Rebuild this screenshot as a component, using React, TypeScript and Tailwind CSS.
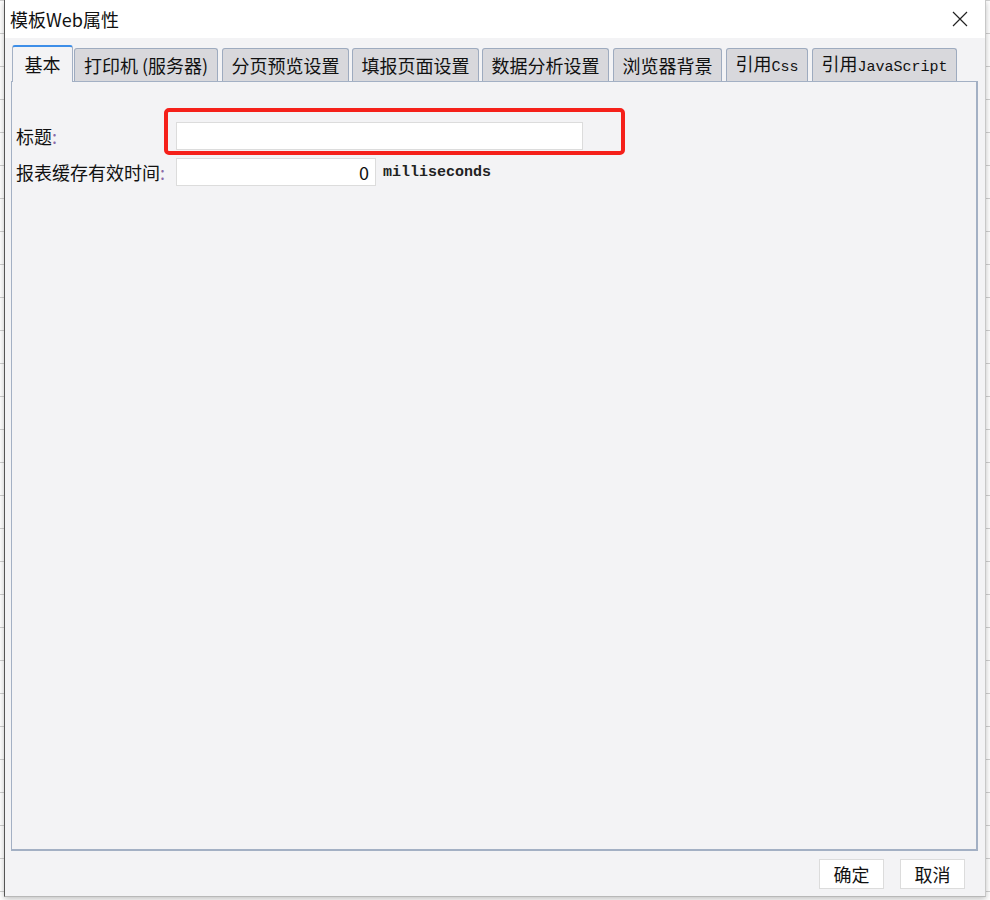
import React from 'react'

const cjk = "font-['Microsoft_YaHei','Noto_Sans_CJK_SC',sans-serif]"
const mono = "font-['Liberation_Mono','DejaVu_Sans_Mono',monospace]"

type Tab = { label: React.ReactNode; w: string; ml: string }

const tabs: Tab[] = [
  { label: '打印机 (服务器)', w: 'w-[144px]', ml: 'ml-[1px]' },
  { label: '分页预览设置', w: 'w-[127px]', ml: 'ml-[4px]' },
  { label: '填报页面设置', w: 'w-[127px]', ml: 'ml-[3px]' },
  { label: '数据分析设置', w: 'w-[127px]', ml: 'ml-[3px]' },
  { label: '浏览器背景', w: 'w-[109px]', ml: 'ml-[4px]' },
  {
    label: (
      <span>
        引用<span className={`${mono} text-[15px]`}>Css</span>
      </span>
    ),
    w: 'w-[82px]',
    ml: 'ml-[4px]',
  },
  {
    label: (
      <span>
        引用<span className={`${mono} text-[15px]`}>JavaScript</span>
      </span>
    ),
    w: 'w-[145px]',
    ml: 'ml-[4px]',
  },
]

function CloseIcon() {
  return (
    <svg width="16" height="16" viewBox="0 0 16 16" fill="none" stroke="#222" strokeWidth="1.2">
      <path d="M1 1 L15 15 M15 1 L1 15" />
    </svg>
  )
}

export default function App() {
  return (
    <div
      className={`${cjk} w-[990px] h-[900px] overflow-hidden bg-white bg-[linear-gradient(#d0d0d0_1px,transparent_1px)] bg-[size:100%_33px]`}
    >
      <div className="relative ml-[4px] w-[982px] h-[897px] flex flex-col border-l border-[#555] border-r border-r-[#c8c8c8] border-b border-b-[#b8b8b8] shadow-[0_2px_6px_rgba(0,0,0,0.25)]">
        {/* Title bar */}
        <div className="h-[38px] bg-white flex items-center justify-between pl-[5px] pr-[17px]">
          <span className="text-[18px] text-[#111] leading-none">模板Web属性</span>
          <CloseIcon />
        </div>

        {/* Body */}
        <div className="flex-1 bg-[#f3f3f5] flex flex-col pl-[6px] pr-[7px] pt-[7px]">
          {/* Tabs */}
          <div className="flex items-end h-[36px]">
            <div className="ml-[1px] w-[61px] h-[37px] -mb-[1px] relative z-10 bg-[#f3f3f5] border-l border-r border-[#a3b0c4] border-t-2 border-t-[#3d8ee8] rounded-t-[3px] flex items-center justify-center text-[18px] text-[#111]">
              基本
            </div>
            {tabs.map((t, i) => (
              <div
                key={i}
                className={`${t.w} ${t.ml} h-[33px] bg-[#d8d8dc] border border-b-0 border-[#9eabbf] rounded-t-[3px] flex items-center justify-center text-[18px] text-[#111] whitespace-nowrap`}
              >
                {t.label}
              </div>
            ))}
          </div>

          {/* Panel */}
          <div className="h-[770px] border border-[#a3b0c4] border-r-2 border-b-2 bg-[#f3f3f5] pl-[4px] pt-[40px]">
            <div className="flex items-center h-[28px]">
              <span className="w-[160px] text-[18px] text-[#111]">
                标题<span className="text-[#8a6aa8]">:</span>
              </span>
              <div className="w-[407px] h-[28px] bg-white border border-[#dcdcdc]" />
            </div>
            <div className="flex items-center h-[28px] mt-[8px]">
              <span className="w-[160px] text-[18px] text-[#111] whitespace-nowrap">
                报表缓存有效时间<span className="text-[#8a6aa8]">:</span>
              </span>
              <div className="w-[200px] h-[28px] bg-white border border-[#dcdcdc] flex items-center justify-end pr-[6px] text-[18px] text-[#111]">
                0
              </div>
              <span className={`${mono} ml-[7px] mt-[3px] text-[15px] font-bold text-[#222]`}>milliseconds</span>
            </div>
          </div>

          {/* Buttons */}
          <div className="flex justify-end gap-[16px] pr-[13px] pt-[8px]">
            <button className="w-[65px] h-[30px] bg-white border border-[#dcdcdc] text-[18px] text-[#111]">确定</button>
            <button className="w-[65px] h-[30px] bg-white border border-[#dcdcdc] text-[18px] text-[#111]">取消</button>
          </div>
        </div>

        {/* annotation highlight */}
        <div className="absolute left-[159px] top-[108px] w-[461px] h-[47px] border-4 border-[#f5201a] rounded-[5px] pointer-events-none" />
      </div>
    </div>
  )
}
